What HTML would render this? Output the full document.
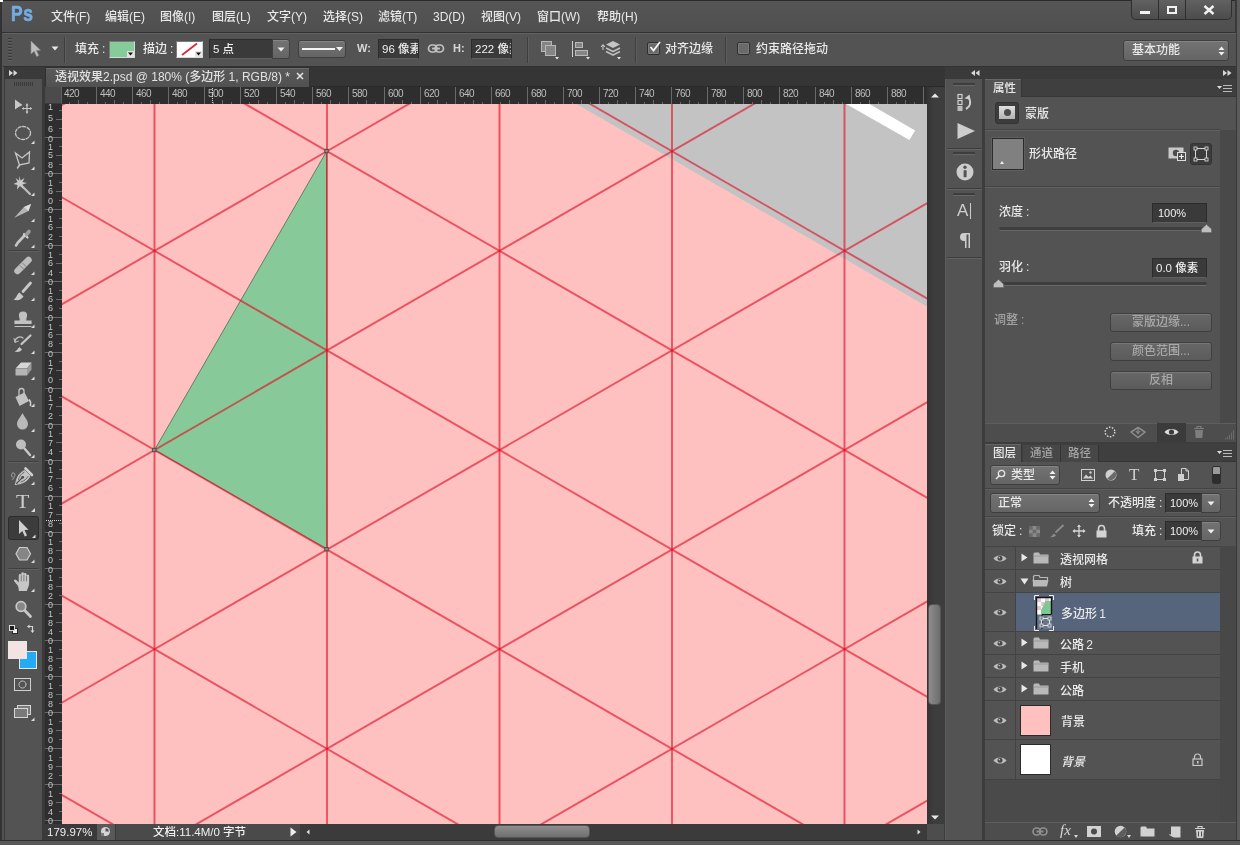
<!DOCTYPE html>
<html lang="zh-CN"><head><meta charset="utf-8"><title>透视效果2.psd</title>
<style>
*{box-sizing:border-box;margin:0;padding:0}
html,body{width:1240px;height:845px;overflow:hidden}
body{background:#535353;font-family:"Liberation Sans","Noto Sans CJK SC",sans-serif;font-size:12px;font-weight:500;color:#e9e9e9;position:relative;line-height:1}
.abs,.abs-all *{position:absolute}
i,b{font-style:normal;font-weight:normal;display:block}
.c{margin-left:3px}
.ln{word-spacing:-1.200px}
.t{position:absolute;white-space:nowrap;line-height:14px;height:14px}
svg{display:block;overflow:hidden}
/* rulers */
#hr{position:absolute;left:62px;top:87px;width:865px;height:17px;background:#2e2e2e;overflow:hidden}
#hr .mt{position:absolute;top:0;width:1px;height:17px;background:#6a6a6a}
#hr .st{position:absolute;bottom:0;width:1px;background:#6a6a6a}
#hr b{position:absolute;top:1.500px;font-size:10px;line-height:10px;color:#bebebe;letter-spacing:-.55px}
#vr{position:absolute;left:45px;top:104px;width:17px;height:720px;background:#2e2e2e;overflow:hidden}
#vr .mt{position:absolute;left:0;height:1px;width:17px;background:#6a6a6a}
#vr .st{position:absolute;right:0;height:1px;background:#6a6a6a}
#vr b{position:absolute;left:1px;width:9px;text-align:center;font-size:9px;line-height:9px;height:9px;color:#c6c6c6}
.inp{position:absolute;background:#3a3a3a;border:1px solid #2c2c2c;border-bottom-color:#5f5f5f;color:#f0f0f0;white-space:nowrap;overflow:hidden}
.btn{position:absolute;background:linear-gradient(#737373,#656565);border:1px solid #3f3f3f;border-radius:3px;box-shadow:inset 0 1px 0 #858585}
.sep{position:absolute;width:1px;background:#3e3e3e;box-shadow:1px 0 0 #5e5e5e}
#root{position:absolute;left:0;top:0;width:1240px;height:845px;will-change:transform}
</style></head><body><div id="root">
<!-- ===== window frame / menu bar ===== -->
<div class="abs" style="left:0;top:0;width:1240px;height:33px;background:linear-gradient(#555555,#4f4f4f);border-top:1px solid #2b2b2b"></div>
<div class="abs" style="left:0;top:32px;width:1236px;height:1px;background:#323232"></div>
<div class="abs" style="left:0;top:0;width:2px;height:845px;background:#333"></div>
<div class="abs" style="left:0;top:0;width:3px;height:2px;background:#fff"></div>
<div class="abs" style="left:1236px;top:0;width:4px;height:2px;background:#fff"></div>
<div class="abs" style="left:1235px;top:0;width:5px;height:845px;background:#5b5b5b;border-left:2px solid #393939"></div>
<div class="abs" style="left:11px;top:2px;font-size:22px;font-weight:bold;color:#78abde;line-height:24px;letter-spacing:.8px;transform:scaleX(.79);transform-origin:left;-webkit-text-stroke:.7px #78abde;text-shadow:0 0 1.500px #2f5278">Ps</div>
<div class="t" style="left:51px;top:10px">文件(F)</div>
<div class="t" style="left:105px;top:10px">编辑(E)</div>
<div class="t" style="left:160px;top:10px">图像(I)</div>
<div class="t" style="left:212px;top:10px">图层(L)</div>
<div class="t" style="left:267px;top:10px">文字(Y)</div>
<div class="t" style="left:323px;top:10px">选择(S)</div>
<div class="t" style="left:378px;top:10px">滤镜(T)</div>
<div class="t" style="left:433px;top:10px">3D(D)</div>
<div class="t" style="left:481px;top:10px">视图(V)</div>
<div class="t" style="left:537px;top:10px">窗口(W)</div>
<div class="t" style="left:597px;top:10px">帮助(H)</div>
<!-- window controls -->
<div class="abs" style="left:1131px;top:0;width:101px;height:20px;background:linear-gradient(#616161,#4c4c4c);border:1px solid #2e2e2e;border-top:none;border-radius:0 0 5px 5px"></div>
<div class="abs" style="left:1158px;top:0;width:1px;height:19px;background:#2e2e2e"></div>
<div class="abs" style="left:1185px;top:0;width:1px;height:19px;background:#2e2e2e"></div>
<div class="abs" style="left:1140px;top:11px;width:10px;height:3px;background:#f2f2f2"></div>
<div class="abs" style="left:1167px;top:6px;width:10px;height:8px;border:2px solid #f2f2f2;border-top-width:2px"></div>
<svg class="abs" style="left:1203px;top:5px" width="12" height="10" viewBox="0 0 12 10"><path d="M1.5 1L10.5 9M10.5 1L1.5 9" stroke="#f2f2f2" stroke-width="2.4"/></svg>
<!-- ===== options bar ===== -->
<div class="abs" style="left:3px;top:33px;width:1233px;height:34px;background:#535353;border-top:1px solid #626262;border-bottom:1px solid #323232"></div>
<div class="abs" style="left:8px;top:38px;width:4px;height:24px;background:repeating-linear-gradient(#3a3a3a 0 1px,#5f5f5f 1px 2px,#535353 2px 3px)"></div>
<svg class="abs" style="left:29px;top:40px" width="14" height="18" viewBox="0 0 14 18"><path d="M2 1L2 14L5.2 11.2L7.6 16.5L9.8 15.5L7.4 10.4L11.5 10.2Z" fill="#bdbdbd" stroke="#8a8a8a" stroke-width=".6"/></svg>
<svg class="abs" style="left:51px;top:46px" width="8" height="5" viewBox="0 0 8 5"><path d="M0.5 0.5L7.5 0.5L4 4.5Z" fill="#e6e6e6"/></svg>
<div class="sep" style="left:64px;top:37px;height:26px"></div>
<div class="t" style="left:75px;top:42px">填充<span class="c">:</span></div>
<div class="abs" style="left:109px;top:41px;width:26px;height:17px;background:#86cc98;border:1px solid #7a7a7a;border-right-color:#d8d8d8;border-bottom-color:#d8d8d8"></div>
<svg class="abs" style="left:127px;top:51px" width="7" height="6" viewBox="0 0 7 6"><rect width="7" height="6" fill="#e4e4e4"/><path d="M1 1.500L6 1.500L3.500 4.500Z" fill="#111"/></svg>
<div class="t" style="left:143px;top:42px">描边<span class="c">:</span></div>
<div class="abs" style="left:176px;top:41px;width:27px;height:17px;background:#ffffff;border:1px solid #7a7a7a;border-right-color:#d8d8d8;border-bottom-color:#d8d8d8"></div>
<svg class="abs" style="left:178px;top:42px" width="24" height="15" viewBox="0 0 24 15"><path d="M4 13L19 1.500" stroke="#d82c34" stroke-width="1.800"/><rect x="17" y="9" width="7" height="6" fill="#e4e4e4"/><path d="M18 10.500L23 10.500L20.500 13.500Z" fill="#111"/></svg>
<div class="inp" style="left:209px;top:39px;width:64px;height:20px;line-height:18px;padding-left:3px;font-size:11.500px">5 点</div>
<div class="btn" style="left:272px;top:39px;width:18px;height:20px;border-radius:0 3px 3px 0"></div>
<svg class="abs" style="left:277px;top:47px" width="8" height="5" viewBox="0 0 8 5"><path d="M0.5 0.5L7.5 0.5L4 4.5Z" fill="#f0f0f0"/></svg>
<div class="btn" style="left:298px;top:40px;width:48px;height:18px"></div>
<div class="abs" style="left:302px;top:48px;width:33px;height:2px;background:#f4f4f4"></div>
<svg class="abs" style="left:336px;top:47px" width="7" height="4" viewBox="0 0 7 4"><path d="M0 0L7 0L3.5 4Z" fill="#f0f0f0"/></svg>
<div class="t" style="left:357px;top:41px;font-weight:bold;font-size:11px;color:#d8d8d8">W:</div>
<div class="inp" style="left:378px;top:39px;width:41px;height:20px;line-height:18px;padding-left:3px;font-size:11.500px">96 像素</div>
<svg class="abs" style="left:427px;top:43px" width="18" height="11" viewBox="0 0 18 11" fill="none"><rect x="1.500" y="2" width="8.500" height="7" rx="3.500" stroke="#c2c2c2" stroke-width="1.700"/><rect x="8" y="2" width="8.500" height="7" rx="3.500" stroke="#c2c2c2" stroke-width="1.700"/><rect x="5" y="4.600" width="8" height="1.800" fill="#c2c2c2"/></svg>
<div class="t" style="left:453px;top:41px;font-weight:bold;font-size:11px;color:#d8d8d8">H:</div>
<div class="inp" style="left:471px;top:39px;width:41px;height:20px;line-height:18px;padding-left:3px;font-size:11.500px">222 像素</div>
<div class="sep" style="left:527px;top:37px;height:26px"></div>
<!-- path ops icons -->
<svg class="abs" style="left:540px;top:40px" width="20" height="20" viewBox="0 0 20 20"><rect x="1.5" y="1.5" width="10" height="10" fill="#858585" stroke="#b8b8b8"/><rect x="5.5" y="5.5" width="10" height="10" fill="#858585" stroke="#b8b8b8"/><path d="M15 17L19 17L17 19.5Z" fill="#e6e6e6"/></svg>
<svg class="abs" style="left:570px;top:40px" width="22" height="20" viewBox="0 0 22 20"><path d="M2.5 1V17" stroke="#d0d0d0"/><rect x="5.5" y="2.5" width="7" height="5" fill="#858585" stroke="#b8b8b8"/><rect x="5.5" y="10.500" width="12" height="5" fill="#858585" stroke="#b8b8b8"/><path d="M16 17L20 17L18 19.5Z" fill="#e6e6e6"/></svg>
<svg class="abs" style="left:600px;top:39px" width="24" height="22" viewBox="0 0 24 22"><path d="M3 6V11M1 8L3 5.500L5 8" stroke="#d6d6d6" fill="none"/><path d="M13 2L20 5.500L13 9L6 5.500Z" fill="#c4c4c4"/><path d="M6 9L13 12.500L20 9M6 12.500L13 16L20 12.500" stroke="#bdbdbd" stroke-width="1.6" fill="none"/><path d="M17 18L21 18L19 20.500Z" fill="#e6e6e6"/></svg>
<div class="sep" style="left:635px;top:37px;height:26px"></div>
<div class="abs" style="left:647px;top:42px;width:13px;height:13px;background:#6a6a6a;border:1px solid #2f2f2f;border-radius:2px;box-shadow:inset 0 0 0 1px #7d7d7d"></div>
<svg class="abs" style="left:648px;top:40px" width="14" height="14" viewBox="0 0 14 14"><path d="M2.500 7L5.500 10.500L12 2" stroke="#f4f4f4" stroke-width="1.8" fill="none"/></svg>
<div class="t" style="left:665px;top:42px">对齐边缘</div>
<div class="sep" style="left:725px;top:37px;height:26px"></div>
<div class="abs" style="left:737px;top:42px;width:13px;height:13px;background:#6a6a6a;border:1px solid #2f2f2f;border-radius:2px;box-shadow:inset 0 0 0 1px #7d7d7d"></div>
<div class="t" style="left:756px;top:42px">约束路径拖动</div>
<div class="btn" style="left:1123px;top:40px;width:106px;height:21px"></div>
<div class="t" style="left:1132px;top:43px">基本功能</div>
<svg class="abs" style="left:1218px;top:46px" width="7" height="10" viewBox="0 0 7 10"><path d="M0.500 4L6.500 4L3.500 0.500ZM0.500 6L6.500 6L3.500 9.500Z" fill="#f0f0f0"/></svg>
<!-- ===== left toolbar ===== -->
<div class="abs" style="left:4px;top:67px;width:39px;height:773px;background:#535353;border-left:1px solid #3a3a3a;border-right:1px solid #3a3a3a"></div>
<div class="abs" style="left:5px;top:67px;width:37px;height:12px;background:#3a3a3a"></div>
<svg class="abs" style="left:9px;top:70px" width="9" height="6" viewBox="0 0 9 6"><path d="M0 0L4 3L0 6ZM4.500 0L8.500 3L4.500 6Z" fill="#d8d8d8"/></svg>
<div class="abs" style="left:14px;top:82px;width:20px;height:4px;background:repeating-linear-gradient(90deg,#3a3a3a 0 1px,#535353 1px 2px)"></div>
<svg class="abs" style="left:5px;top:90px" width="37" height="640" viewBox="5 90 37 640" fill="none" stroke-linecap="round">
<defs><path id="ct" d="M0 0L3.500 0L3.500 -3.500Z" fill="#dcdcdc" stroke="none"/></defs>
<!-- move -->
<path d="M15 99.500L15 109.500L17.800 107.500L22.500 105Z" fill="#c8c8c8"/>
<path d="M27 104V113M22.500 108.500H31.500" stroke="#c8c8c8" stroke-width="1.200"/><path d="M25.500 105.500L27 103.500L28.500 105.500ZM25.500 111.500L27 113.500L28.500 111.500ZM24 107L22 108.500L24 110ZM30 107L32 108.500L30 110Z" fill="#c8c8c8"/>
<!-- ellipse marquee -->
<ellipse cx="23" cy="133" rx="7.500" ry="6.500" stroke="#c6c6c6" stroke-width="1.300" stroke-dasharray="3 1.600"/>
<use href="#ct" x="31" y="144"/>
<!-- polygon lasso -->
<path d="M15.500 153L22 158L29.500 152L29 163L19.500 165Z" stroke="#c6c6c6" stroke-width="1.300"/><path d="M19.500 165L17.500 168" stroke="#c6c6c6" stroke-width="1.500"/>
<use href="#ct" x="31" y="170"/>
<!-- magic wand -->
<path d="M21 185L30 194" stroke="#bdbdbd" stroke-width="2.200"/><path d="M19.500 176L20.500 180.500L24.500 178L22.500 182L27 183L22.500 184.500L23.500 189L20 186L17 189.500L17.500 185L13.500 184L17.500 182L15.500 178L19 180.500Z" fill="#c8c8c8"/>
<use href="#ct" x="31" y="196"/>
<!-- slice -->
<path d="M14 218L24 207L31 204L28.500 211Z" fill="#b4b4b4"/><path d="M24 207L31 204L28.500 211Z" fill="#dedede"/>
<use href="#ct" x="31" y="222"/>
<!-- eyedropper -->
<path d="M17 244L16 245.500M17.500 243L24.500 235.500" stroke="#c6c6c6" stroke-width="2.600"/><path d="M24 234L27.500 237.500" stroke="#dcdcdc" stroke-width="2"/><path d="M26.500 234.500L29 231.500" stroke="#9b9b9b" stroke-width="3.600"/>
<use href="#ct" x="31" y="248"/>
<path d="M9 250.500H38" stroke="#3f3f3f" stroke-width="1"/><path d="M9 251.500H38" stroke="#606060" stroke-width="1"/>
<!-- healing -->
<path d="M17.500 271L28.500 260" stroke="#bcbcbc" stroke-width="6.500"/><path d="M20 265.500L23.500 269M22.500 263L26 266.500" stroke="#7d7d7d" stroke-width="1"/>
<use href="#ct" x="31" y="275"/>
<!-- brush -->
<path d="M23 291.500L30.500 283" stroke="#c8c8c8" stroke-width="2.800"/><path d="M13.500 299.500C16.500 298.500 16.500 294.500 19.500 292.500L23.500 296.500C21.500 300 17 301 13.500 299.500Z" fill="#c8c8c8"/>
<use href="#ct" x="31" y="301"/>
<!-- stamp -->
<path d="M15 326.500H31M15 323.500H31V321H26C25 319 26.500 317 26.500 315.500A3.500 3.500 0 0 0 19.500 315.500C19.500 317 21 319 20 321H15Z" fill="#c2c2c2" stroke="#c2c2c2" stroke-width="1.200"/>
<use href="#ct" x="31" y="328"/>
<!-- history brush -->
<path d="M21.500 344L30.500 335.500" stroke="#c8c8c8" stroke-width="2.200"/><path d="M14.500 351.500C17 351 17.500 348.500 19.500 347L22 349.500C20.500 352 17 352.500 14.500 351.500Z" fill="#c8c8c8"/><path d="M15 341.500A5 5 0 0 1 23 338" stroke="#c0c0c0" stroke-width="1.300"/><path d="M14 338.500L15 342.500L18.500 341" stroke="#c0c0c0" stroke-width="1"/>
<use href="#ct" x="31" y="354"/>
<!-- eraser -->
<path d="M21 362.500H31.500L27 368.500H15.500Z" fill="#d6d6d6"/><path d="M15.500 369H27V375.500H15.500Z" fill="#b4b4b4"/><path d="M27 368.500L31.500 362.500V369.500L27 375.500Z" fill="#9a9a9a"/>
<use href="#ct" x="31" y="380"/>
<!-- bucket -->
<g transform="translate(0 2.500)"><path d="M15.500 394.500L24.500 390L29 398.500L19.500 403.500Z" fill="#c2c2c2"/><path d="M19 393V388.500A2.500 2.500 0 0 1 24 388.500V391" stroke="#c2c2c2" stroke-width="1.300"/><path d="M29.500 397.500C31 399.500 31 401 30.500 403" stroke="#d6d6d6" stroke-width="1.600"/></g>
<use href="#ct" x="31" y="407"/>
<!-- blur drop -->
<path d="M22.500 413C25 418 28 420.500 28 424A5.500 5.500 0 0 1 17 424C17 420.500 20 418 22.500 413Z" fill="#b9b9b9"/>
<use href="#ct" x="31" y="432"/>
<!-- dodge -->
<circle cx="21" cy="444.500" r="5" fill="#bebebe"/><path d="M24.500 448.500L30 455" stroke="#c8c8c8" stroke-width="2.400"/>
<use href="#ct" x="31" y="458"/>
<path d="M9 461.500H38" stroke="#3f3f3f" stroke-width="1"/><path d="M9 462.500H38" stroke="#606060" stroke-width="1"/>
<!-- pen -->
<path d="M15.500 484.500C16.500 479 18 473.500 24.500 470.500L30 476C27 482.500 21.500 483.500 15.500 484.500Z" fill="#c4c4c4" stroke="#c6c6c6" stroke-width="1"/><path d="M16.500 483.500L22 478" stroke="#4a4a4a" stroke-width="1.100"/><circle cx="22.700" cy="477.300" r="1.400" fill="#4a4a4a"/><path d="M18.500 479.500C19.500 476 21 473.800 24 472.300M21 482C24 481 26.300 479.500 28 476.500" stroke="#5a5a5a" stroke-width=".9"/><path d="M25.500 468.500L32 475" stroke="#d0d0d0" stroke-width="2.600"/><path d="M12 477C10.500 474.500 12.500 471.500 14.500 473.500C16 475 13.500 477.500 12.800 479.500" stroke="#a8a8a8" stroke-width="1"/>
<use href="#ct" x="31" y="485"/>
<!-- selected tool bg -->
<rect x="8.500" y="516.500" width="30" height="23" rx="2" fill="#3c3c3c" stroke="#2d2d2d"/>
<!-- path selection arrow -->
<path d="M19 520L19 534L22.300 531L24.800 536.500L27 535.500L24.500 530L28.500 529.800Z" fill="#cfcfcf"/>
<use href="#ct" x="32" y="538"/>
<!-- polygon shape -->
<path d="M19.500 547.500H27L30.500 553.800L27 560H19.500L16 553.800Z" fill="#858585" stroke="#cdcdcd" stroke-width="1.200"/>
<use href="#ct" x="31" y="563"/>
<path d="M9 568.500H38" stroke="#3f3f3f" stroke-width="1"/><path d="M9 569.500H38" stroke="#606060" stroke-width="1"/>
<!-- hand -->
<g transform="translate(22.500 582) scale(1.250 1.050) translate(-21.500 -581)"><path d="M17.500 584L15 580.500C14 579 15.500 578 16.800 579.300L18.500 581.500V574.500C18.500 573 20.500 573 20.500 574.500V572.800C20.500 571.300 22.600 571.300 22.600 572.800V573.500C22.600 572 24.700 572 24.700 573.500V575C24.700 573.800 26.800 573.800 26.800 575V582C26.800 585 25.500 587 25 589.500H18.500C18.500 587.500 18.500 586 17.500 584Z" fill="#c6c6c6"/><path d="M20.500 575V580M22.600 574.500V580M24.700 575.500V580" stroke="#6a6a6a" stroke-width=".7"/></g>
<use href="#ct" x="31" y="592"/>
<!-- zoom -->
<circle cx="21" cy="606.500" r="4.800" fill="#878787" stroke="#c8c8c8" stroke-width="1.700"/><path d="M24.800 610.500L30.500 616.500" stroke="#c8c8c8" stroke-width="2.800"/>
<!-- default colors + swap -->
<rect x="12.500" y="628.500" width="5" height="5" fill="#f0f0f0" stroke="#2a2a2a"/><rect x="9.500" y="625.500" width="5" height="5" fill="#1c1c1c" stroke="#dcdcdc"/>
<path d="M29 626.500H32.500V631" stroke="#d6d6d6" stroke-width="1.200"/><path d="M27 626.500L29.500 624.500V628.500ZM32.500 633L30.500 630.500H34.500Z" fill="#d6d6d6"/>
<!-- fg/bg -->
<rect x="19.500" y="651.500" width="17" height="17" fill="#25aaf5" stroke="#e8e8e8"/>
<rect x="8.500" y="641.500" width="18" height="17" fill="#f3e3e3" stroke="#e8e8e8"/>
<!-- quick mask -->
<rect x="14.500" y="678.500" width="16" height="12" stroke="#d0d0d0" stroke-width="1"/><circle cx="22.500" cy="684.500" r="3.500" stroke="#d0d0d0" stroke-width="1" stroke-dasharray="1 1"/>
<!-- screen mode -->
<rect x="17.500" y="705.500" width="13" height="9" fill="#7a7a7a" stroke="#d6d6d6"/><rect x="14.500" y="708.500" width="13" height="9" fill="#7a7a7a" stroke="#d6d6d6"/>
<use href="#ct" x="31" y="721"/>
</svg>
<div class="abs" style="left:16px;top:490px;font-family:'Liberation Serif',serif;font-size:19px;font-weight:normal;line-height:24px;color:#cfcfcf;transform:scaleX(1.150);transform-origin:left">T</div>
<svg class="abs" style="left:31px;top:508px" width="4" height="4" viewBox="0 0 4 4"><path d="M0 4L4 4L4 0Z" fill="#dcdcdc"/></svg>
<!-- ===== document window ===== -->
<div class="abs" style="left:43px;top:67px;width:905px;height:773px;background:#3a3a3a"></div>
<div class="abs" style="left:45px;top:67px;width:900px;height:20px;background:#353535;border-bottom:1px solid #2a2a2a"></div>
<div class="abs" style="left:45px;top:67px;width:265px;height:20px;background:linear-gradient(#5a5a5a,#515151);border:1px solid #303030;border-bottom:none;box-shadow:inset 0 1px 0 #6a6a6a"></div>
<div class="t" style="left:55px;top:70px;color:#e2e2e2">透视效果2.psd @ 180% (多边形 1, RGB/8) *</div>
<svg class="abs" style="left:296px;top:72px" width="8" height="8" viewBox="0 0 8 8"><path d="M1 1L7 7M7 1L1 7" stroke="#e6e6e6" stroke-width="1.500"/></svg>
<div class="abs" style="left:45px;top:87px;width:17px;height:17px;background:#4b4b4b;border-right:1px solid #5d5d5d;border-bottom:1px solid #3a3a3a"></div>
<div id="hr"><i class="st" style="left:7px;height:2px"></i><i class="st" style="left:16px;height:4px"></i><i class="st" style="left:25px;height:2px"></i><i class="mt" style="left:34px"></i><i class="st" style="left:43px;height:2px"></i><i class="st" style="left:52px;height:4px"></i><i class="st" style="left:61px;height:2px"></i><i class="mt" style="left:70px"></i><i class="st" style="left:79px;height:2px"></i><i class="st" style="left:88px;height:4px"></i><i class="st" style="left:97px;height:2px"></i><i class="mt" style="left:106px"></i><i class="st" style="left:115px;height:2px"></i><i class="st" style="left:124px;height:4px"></i><i class="st" style="left:133px;height:2px"></i><i class="mt" style="left:142px"></i><i class="st" style="left:151px;height:2px"></i><i class="st" style="left:160px;height:4px"></i><i class="st" style="left:169px;height:2px"></i><i class="mt" style="left:178px"></i><i class="st" style="left:187px;height:2px"></i><i class="st" style="left:196px;height:4px"></i><i class="st" style="left:205px;height:2px"></i><i class="mt" style="left:214px"></i><i class="st" style="left:223px;height:2px"></i><i class="st" style="left:232px;height:4px"></i><i class="st" style="left:241px;height:2px"></i><i class="mt" style="left:250px"></i><i class="st" style="left:259px;height:2px"></i><i class="st" style="left:268px;height:4px"></i><i class="st" style="left:277px;height:2px"></i><i class="mt" style="left:286px"></i><i class="st" style="left:295px;height:2px"></i><i class="st" style="left:304px;height:4px"></i><i class="st" style="left:313px;height:2px"></i><i class="mt" style="left:322px"></i><i class="st" style="left:331px;height:2px"></i><i class="st" style="left:340px;height:4px"></i><i class="st" style="left:349px;height:2px"></i><i class="mt" style="left:358px"></i><i class="st" style="left:366px;height:2px"></i><i class="st" style="left:375px;height:4px"></i><i class="st" style="left:384px;height:2px"></i><i class="mt" style="left:393px"></i><i class="st" style="left:402px;height:2px"></i><i class="st" style="left:411px;height:4px"></i><i class="st" style="left:420px;height:2px"></i><i class="mt" style="left:429px"></i><i class="st" style="left:438px;height:2px"></i><i class="st" style="left:447px;height:4px"></i><i class="st" style="left:456px;height:2px"></i><i class="mt" style="left:465px"></i><i class="st" style="left:474px;height:2px"></i><i class="st" style="left:483px;height:4px"></i><i class="st" style="left:492px;height:2px"></i><i class="mt" style="left:501px"></i><i class="st" style="left:510px;height:2px"></i><i class="st" style="left:519px;height:4px"></i><i class="st" style="left:528px;height:2px"></i><i class="mt" style="left:537px"></i><i class="st" style="left:546px;height:2px"></i><i class="st" style="left:555px;height:4px"></i><i class="st" style="left:564px;height:2px"></i><i class="mt" style="left:573px"></i><i class="st" style="left:582px;height:2px"></i><i class="st" style="left:591px;height:4px"></i><i class="st" style="left:600px;height:2px"></i><i class="mt" style="left:609px"></i><i class="st" style="left:618px;height:2px"></i><i class="st" style="left:627px;height:4px"></i><i class="st" style="left:636px;height:2px"></i><i class="mt" style="left:645px"></i><i class="st" style="left:654px;height:2px"></i><i class="st" style="left:663px;height:4px"></i><i class="st" style="left:672px;height:2px"></i><i class="mt" style="left:681px"></i><i class="st" style="left:690px;height:2px"></i><i class="st" style="left:699px;height:4px"></i><i class="st" style="left:708px;height:2px"></i><i class="mt" style="left:717px"></i><i class="st" style="left:726px;height:2px"></i><i class="st" style="left:735px;height:4px"></i><i class="st" style="left:744px;height:2px"></i><i class="mt" style="left:753px"></i><i class="st" style="left:762px;height:2px"></i><i class="st" style="left:771px;height:4px"></i><i class="st" style="left:780px;height:2px"></i><i class="mt" style="left:789px"></i><i class="st" style="left:798px;height:2px"></i><i class="st" style="left:807px;height:4px"></i><i class="st" style="left:816px;height:2px"></i><i class="mt" style="left:825px"></i><i class="st" style="left:834px;height:2px"></i><i class="st" style="left:843px;height:4px"></i><i class="st" style="left:852px;height:2px"></i><i class="mt" style="left:861px"></i><b style="left:2px">420</b><b style="left:38px">440</b><b style="left:74px">460</b><b style="left:110px">480</b><b style="left:146px">500</b><b style="left:182px">520</b><b style="left:218px">540</b><b style="left:254px">560</b><b style="left:290px">580</b><b style="left:326px">600</b><b style="left:362px">620</b><b style="left:397px">640</b><b style="left:433px">660</b><b style="left:469px">680</b><b style="left:505px">700</b><b style="left:541px">720</b><b style="left:577px">740</b><b style="left:613px">760</b><b style="left:649px">780</b><b style="left:685px">800</b><b style="left:721px">820</b><b style="left:757px">840</b><b style="left:793px">860</b><b style="left:829px">880</b></div>
<div id="vr"><i class="st" style="top:6px;width:3px"></i><i class="st" style="top:15px;width:6px"></i><i class="st" style="top:24px;width:3px"></i><i class="mt" style="top:33px"></i><i class="st" style="top:42px;width:3px"></i><i class="st" style="top:51px;width:6px"></i><i class="st" style="top:60px;width:3px"></i><i class="mt" style="top:69px"></i><i class="st" style="top:78px;width:3px"></i><i class="st" style="top:87px;width:6px"></i><i class="st" style="top:96px;width:3px"></i><i class="mt" style="top:105px"></i><i class="st" style="top:114px;width:3px"></i><i class="st" style="top:123px;width:6px"></i><i class="st" style="top:132px;width:3px"></i><i class="mt" style="top:141px"></i><i class="st" style="top:150px;width:3px"></i><i class="st" style="top:159px;width:6px"></i><i class="st" style="top:168px;width:3px"></i><i class="mt" style="top:177px"></i><i class="st" style="top:186px;width:3px"></i><i class="st" style="top:195px;width:6px"></i><i class="st" style="top:204px;width:3px"></i><i class="mt" style="top:213px"></i><i class="st" style="top:221px;width:3px"></i><i class="st" style="top:230px;width:6px"></i><i class="st" style="top:239px;width:3px"></i><i class="mt" style="top:248px"></i><i class="st" style="top:257px;width:3px"></i><i class="st" style="top:266px;width:6px"></i><i class="st" style="top:275px;width:3px"></i><i class="mt" style="top:284px"></i><i class="st" style="top:293px;width:3px"></i><i class="st" style="top:302px;width:6px"></i><i class="st" style="top:311px;width:3px"></i><i class="mt" style="top:320px"></i><i class="st" style="top:329px;width:3px"></i><i class="st" style="top:338px;width:6px"></i><i class="st" style="top:347px;width:3px"></i><i class="mt" style="top:356px"></i><i class="st" style="top:365px;width:3px"></i><i class="st" style="top:374px;width:6px"></i><i class="st" style="top:383px;width:3px"></i><i class="mt" style="top:392px"></i><i class="st" style="top:401px;width:3px"></i><i class="st" style="top:410px;width:6px"></i><i class="st" style="top:419px;width:3px"></i><i class="mt" style="top:428px"></i><i class="st" style="top:437px;width:3px"></i><i class="st" style="top:446px;width:6px"></i><i class="st" style="top:455px;width:3px"></i><i class="mt" style="top:464px"></i><i class="st" style="top:473px;width:3px"></i><i class="st" style="top:482px;width:6px"></i><i class="st" style="top:491px;width:3px"></i><i class="mt" style="top:500px"></i><i class="st" style="top:509px;width:3px"></i><i class="st" style="top:518px;width:6px"></i><i class="st" style="top:527px;width:3px"></i><i class="mt" style="top:536px"></i><i class="st" style="top:545px;width:3px"></i><i class="st" style="top:554px;width:6px"></i><i class="st" style="top:563px;width:3px"></i><i class="mt" style="top:572px"></i><i class="st" style="top:581px;width:3px"></i><i class="st" style="top:590px;width:6px"></i><i class="st" style="top:599px;width:3px"></i><i class="mt" style="top:608px"></i><i class="st" style="top:617px;width:3px"></i><i class="st" style="top:626px;width:6px"></i><i class="st" style="top:635px;width:3px"></i><i class="mt" style="top:644px"></i><i class="st" style="top:653px;width:3px"></i><i class="st" style="top:662px;width:6px"></i><i class="st" style="top:671px;width:3px"></i><i class="mt" style="top:680px"></i><i class="st" style="top:689px;width:3px"></i><i class="st" style="top:698px;width:6px"></i><i class="st" style="top:707px;width:3px"></i><i class="mt" style="top:716px"></i><b style="top:-0.7px">1</b><b style="top:9.9px">5</b><b style="top:20.9px">6</b><b style="top:30.5px">0</b><b style="top:38.8px">1</b><b style="top:47.4px">5</b><b style="top:56.7px">8</b><b style="top:66.1px">0</b><b style="top:74.7px">1</b><b style="top:83.4px">6</b><b style="top:92.6px">0</b><b style="top:102.0px">0</b><b style="top:110.7px">1</b><b style="top:119.3px">6</b><b style="top:128.6px">2</b><b style="top:137.9px">0</b><b style="top:146.6px">1</b><b style="top:155.3px">6</b><b style="top:164.5px">4</b><b style="top:173.9px">0</b><b style="top:182.6px">1</b><b style="top:191.2px">6</b><b style="top:200.4px">6</b><b style="top:209.9px">0</b><b style="top:218.5px">1</b><b style="top:227.2px">6</b><b style="top:236.4px">8</b><b style="top:245.8px">0</b><b style="top:254.5px">1</b><b style="top:263.2px">7</b><b style="top:272.4px">0</b><b style="top:281.8px">0</b><b style="top:290.4px">1</b><b style="top:299.1px">7</b><b style="top:308.3px">2</b><b style="top:317.7px">0</b><b style="top:326.4px">1</b><b style="top:335.1px">7</b><b style="top:344.2px">4</b><b style="top:353.7px">0</b><b style="top:362.3px">1</b><b style="top:371.0px">7</b><b style="top:380.2px">6</b><b style="top:389.6px">0</b><b style="top:398.3px">1</b><b style="top:407.0px">7</b><b style="top:416.2px">8</b><b style="top:425.6px">0</b><b style="top:434.2px">1</b><b style="top:442.9px">8</b><b style="top:452.1px">0</b><b style="top:461.5px">0</b><b style="top:470.1px">1</b><b style="top:478.9px">8</b><b style="top:488.0px">2</b><b style="top:497.4px">0</b><b style="top:506.1px">1</b><b style="top:514.8px">8</b><b style="top:524.0px">4</b><b style="top:533.4px">0</b><b style="top:542.0px">1</b><b style="top:550.8px">8</b><b style="top:559.9px">6</b><b style="top:569.3px">0</b><b style="top:578.0px">1</b><b style="top:586.7px">8</b><b style="top:595.9px">8</b><b style="top:605.3px">0</b><b style="top:614.0px">1</b><b style="top:622.7px">9</b><b style="top:631.9px">0</b><b style="top:641.2px">0</b><b style="top:649.9px">1</b><b style="top:658.6px">9</b><b style="top:667.8px">2</b><b style="top:677.2px">0</b><b style="top:685.9px">1</b><b style="top:694.6px">9</b><b style="top:703.8px">4</b><b style="top:713.1px">0</b></div>
<svg class="abs" style="left:62px;top:104px" width="865" height="720" viewBox="0 0 865 720">
<defs><filter id="sf" x="-5%" y="-5%" width="110%" height="110%"><feGaussianBlur stdDeviation="0.45"/></filter></defs>
<rect width="865" height="720" fill="#ffc0c0"/>
<polygon points="514.5,0 865,0 865,202.4" fill="#c3c3c3"/>
<polygon points="784.1,0 807.5,0 853.1,26.599999999999994 847.4,35.900000000000006" fill="#ffffff"/>
<polygon points="264.5,47.5 92.5,346 265,445" fill="#88c999" stroke="#4f6b58" stroke-width="0.8"/>
<g stroke="#de1028" stroke-opacity=".64" stroke-width="1.9" fill="none" filter="url(#sf)"><line x1="-80.00" y1="-5" x2="-80.00" y2="725"/><line x1="92.50" y1="-5" x2="92.50" y2="725"/><line x1="265.00" y1="-5" x2="265.00" y2="725"/><line x1="437.50" y1="-5" x2="437.50" y2="725"/><line x1="610.00" y1="-5" x2="610.00" y2="725"/><line x1="782.50" y1="-5" x2="782.50" y2="725"/><line x1="955.00" y1="-5" x2="955.00" y2="725"/><line x1="-62.00" y1="-938.32" x2="938.00" y2="-360.97"/><line x1="-62.00" y1="-759.91" x2="938.00" y2="-1337.26"/><line x1="-62.00" y1="-739.13" x2="938.00" y2="-161.78"/><line x1="-62.00" y1="-560.73" x2="938.00" y2="-1138.08"/><line x1="-62.00" y1="-539.94" x2="938.00" y2="37.41"/><line x1="-62.00" y1="-361.54" x2="938.00" y2="-938.89"/><line x1="-62.00" y1="-340.76" x2="938.00" y2="236.59"/><line x1="-62.00" y1="-162.36" x2="938.00" y2="-739.71"/><line x1="-62.00" y1="-141.57" x2="938.00" y2="435.78"/><line x1="-62.00" y1="36.83" x2="938.00" y2="-540.52"/><line x1="-62.00" y1="57.61" x2="938.00" y2="634.96"/><line x1="-62.00" y1="236.01" x2="938.00" y2="-341.34"/><line x1="-62.00" y1="256.80" x2="938.00" y2="834.15"/><line x1="-62.00" y1="435.20" x2="938.00" y2="-142.15"/><line x1="-62.00" y1="455.99" x2="938.00" y2="1033.34"/><line x1="-62.00" y1="634.39" x2="938.00" y2="57.04"/><line x1="-62.00" y1="655.17" x2="938.00" y2="1232.52"/><line x1="-62.00" y1="833.57" x2="938.00" y2="256.22"/><line x1="-62.00" y1="854.36" x2="938.00" y2="1431.71"/><line x1="-62.00" y1="1032.76" x2="938.00" y2="455.41"/><line x1="-62.00" y1="1053.54" x2="938.00" y2="1630.89"/><line x1="-62.00" y1="1231.94" x2="938.00" y2="654.59"/><line x1="-62.00" y1="1252.73" x2="938.00" y2="1830.08"/><line x1="-62.00" y1="1431.13" x2="938.00" y2="853.78"/><line x1="-62.00" y1="1451.91" x2="938.00" y2="2029.26"/><line x1="-62.00" y1="1630.32" x2="938.00" y2="1052.97"/><line x1="-62.00" y1="1651.10" x2="938.00" y2="2228.45"/><line x1="-62.00" y1="1829.50" x2="938.00" y2="1252.15"/></g>
<g fill="#7d9588" stroke="#4a4a4a" stroke-width=".9"><rect x="262.8" y="45.30000000000001" width="3.4" height="3.4"/><rect x="90.6" y="344.3" width="3.4" height="3.4"/><rect x="262.8" y="443.5" width="3.4" height="3.4"/></g>
</svg>
<div class="abs" style="left:212px;top:88px;width:1px;height:16px;background:repeating-linear-gradient(#d8d8d8 0 1px,transparent 1px 2px)"></div>
<div class="abs" style="left:46px;top:520px;width:16px;height:1px;background:repeating-linear-gradient(90deg,#d8d8d8 0 1px,transparent 1px 2px)"></div>
<!-- v scrollbar -->
<div class="abs" style="left:927px;top:87px;width:17px;height:737px;background:linear-gradient(90deg,#333,#3d3d3d 40%,#3d3d3d)"></div>
<svg class="abs" style="left:931px;top:93px" width="8" height="5" viewBox="0 0 8 5"><path d="M0 4.500L4 0.500L8 4.500Z" fill="#e8e8e8"/></svg>
<svg class="abs" style="left:931px;top:815px" width="8" height="5" viewBox="0 0 8 5"><path d="M0 0.500L4 4.500L8 0.500Z" fill="#e8e8e8"/></svg>
<div class="abs" style="left:928px;top:604px;width:13px;height:101px;border-radius:4px;background:linear-gradient(90deg,#8c8c8c,#6d6d6d);border:1px solid #555"></div>
<!-- status bar -->
<div class="abs" style="left:45px;top:824px;width:882px;height:16px;background:#3b3b3b"></div>
<div class="abs" style="left:45px;top:824px;width:52px;height:16px;background:#3a3a3a"></div>
<div class="t" style="left:47px;top:825px;font-size:11.500px;color:#f0f0f0">179.97%</div>
<div class="abs" style="left:97px;top:824px;width:18px;height:16px;background:#595959"></div>
<svg class="abs" style="left:100px;top:826px" width="11" height="11" viewBox="0 0 11 11"><circle cx="5.500" cy="5.500" r="4.500" fill="#d6d6d6"/><path d="M5.500 5.500V2.200A3.300 3.300 0 0 1 8.800 5.500Z" fill="#555"/><rect x="1" y="7" width="3" height="3" fill="#7a7a7a"/></svg>
<div class="abs" style="left:116px;top:824px;width:184px;height:16px;background:#4a4a4a"></div>
<div class="t" style="left:153px;top:825px;font-size:11.500px;color:#f0f0f0">文档:11.4M/0 字节</div>
<svg class="abs" style="left:290px;top:827px" width="7" height="10" viewBox="0 0 7 10"><path d="M0.500 0.500L6.500 5L0.500 9.500Z" fill="#f0f0f0"/></svg>
<svg class="abs" style="left:306px;top:829px" width="4" height="6" viewBox="0 0 4 6"><path d="M3.500 0.500L0.500 3L3.500 5.500Z" fill="#e0e0e0"/></svg>
<svg class="abs" style="left:917px;top:829px" width="4" height="6" viewBox="0 0 4 6"><path d="M0.500 0.500L3.500 3L0.500 5.500Z" fill="#e0e0e0"/></svg>
<div class="abs" style="left:494px;top:825px;width:96px;height:13px;border-radius:4px;background:linear-gradient(#8e8e8e,#6f6f6f);border:1px solid #555"></div>
<div class="abs" style="left:927px;top:824px;width:17px;height:16px;background:#4d4d4d"></div>
<!-- bottom frame -->
<div class="abs" style="left:0;top:840px;width:1240px;height:5px;background:#585858;border-top:1px solid #2e2e2e"></div>
<!-- ===== right dock ===== -->
<div class="abs" style="left:945px;top:67px;width:291px;height:773px;background:#3d3d3d"></div>
<div class="abs" style="left:945px;top:67px;width:291px;height:12px;background:#3a3a3a"></div>
<svg class="abs" style="left:971px;top:70px" width="9" height="6" viewBox="0 0 9 6"><path d="M4 0L0 3L4 6ZM8.500 0L4.500 3L8.500 6Z" fill="#d8d8d8"/></svg>
<svg class="abs" style="left:1223px;top:70px" width="9" height="6" viewBox="0 0 9 6"><path d="M0 0L4 3L0 6ZM4.500 0L8.500 3L4.500 6Z" fill="#d8d8d8"/></svg>
<!-- collapsed icon strip -->
<div class="abs" style="left:945px;top:79px;width:37px;height:761px;background:#535353;border-left:1px solid #5f5f5f"></div>
<div class="abs" style="left:953px;top:83px;width:22px;height:3px;background:#3d3d3d;border-bottom:1px solid #666"></div>
<svg class="abs" style="left:955px;top:92px" width="20" height="20" viewBox="0 0 20 20" fill="none"><rect x="3" y="2.500" width="4" height="4" stroke="#cfcfcf" stroke-width="1.200"/><rect x="3" y="8.500" width="4" height="4" stroke="#cfcfcf" stroke-width="1.200"/><rect x="2.500" y="14" width="5" height="5" fill="#bdbdbd"/><path d="M11 17C15 15 17 10 13 5" stroke="#cfcfcf" stroke-width="2"/><path d="M9.500 6.500L14.500 2.500L15.500 7.500Z" fill="#cfcfcf"/></svg>
<svg class="abs" style="left:956px;top:122px" width="20" height="18" viewBox="0 0 20 18"><path d="M1.500 1L19 9L1.500 17Z" fill="#cdcdcd"/></svg>
<div class="abs" style="left:947px;top:148px;width:35px;height:1px;background:#3d3d3d;box-shadow:0 1px 0 #636363"></div>
<div class="abs" style="left:953px;top:152px;width:22px;height:3px;background:#3d3d3d;border-bottom:1px solid #666"></div>
<svg class="abs" style="left:955px;top:162px" width="20" height="20" viewBox="0 0 20 20"><circle cx="10" cy="10" r="8.500" fill="#cdcdcd"/><rect x="8.600" y="8.200" width="3" height="7" fill="#535353"/><circle cx="10" cy="5.300" r="1.700" fill="#535353"/></svg>
<div class="abs" style="left:947px;top:188px;width:35px;height:1px;background:#3d3d3d;box-shadow:0 1px 0 #636363"></div>
<div class="abs" style="left:953px;top:193px;width:22px;height:3px;background:#3d3d3d;border-bottom:1px solid #666"></div>
<div class="abs" style="left:957px;top:201px;font-size:17px;line-height:20px;color:#cdcdcd">A</div>
<div class="abs" style="left:970px;top:203px;width:1px;height:16px;background:#cdcdcd"></div>
<svg class="abs" style="left:958px;top:233px" width="14" height="16" viewBox="0 0 14 16"><path d="M6 0H12V15H10.500V1.500H8.500V15H7V8H6A4 4 0 0 1 6 0Z" fill="#cdcdcd"/></svg>
<div class="abs" style="left:947px;top:257px;width:35px;height:1px;background:#3d3d3d;box-shadow:0 1px 0 #636363"></div>
<!-- ===== properties panel ===== -->
<div class="abs" style="left:985px;top:79px;width:251px;height:363px;background:#535353"></div>
<div class="abs" style="left:985px;top:79px;width:251px;height:18px;background:#3f3f3f;border-bottom:1px solid #363636"></div>
<div class="abs" style="left:985px;top:79px;width:37px;height:18px;background:#535353;border-right:1px solid #383838;box-shadow:inset 0 1px 0 #666"></div>
<div class="t" style="left:993px;top:81px;font-size:11.500px">属性</div>
<svg class="abs" style="left:1217px;top:84px" width="15" height="9" viewBox="0 0 15 9"><path d="M0 2L5 2L2.500 5Z" fill="#e0e0e0"/><path d="M6 1.500H15M6 4.500H15M6 7.500H15" stroke="#bababa" stroke-width="1.200"/></svg>
<div class="abs" style="left:995px;top:102px;width:24px;height:22px;background:#3c3c3c;border:1px solid #333;border-radius:3px"></div>
<div class="abs" style="left:999px;top:106px;width:16px;height:13px;background:linear-gradient(#dedede,#b4b4b4)"></div>
<div class="abs" style="left:1004px;top:109px;width:7px;height:7px;border-radius:50%;background:#4c4c4c"></div>
<div class="t" style="left:1025px;top:107px">蒙版</div>
<div class="abs" style="left:985px;top:129px;width:235px;height:1px;background:#434343;box-shadow:0 1px 0 #616161"></div>
<div class="abs" style="left:1220px;top:130px;width:16px;height:293px;background:#494949"></div>
<div class="abs" style="left:992px;top:138px;width:32px;height:32px;background:#808080;border:1px solid #2b2b2b;box-shadow:0 0 0 1px #5f5f5f"></div>
<svg class="abs" style="left:1000px;top:160px" width="4" height="4" viewBox="0 0 4 4"><path d="M0 4L4 4L2 1Z" fill="#f0f0f0"/></svg>
<div class="t" style="left:1029px;top:147px">形状路径</div>
<svg class="abs" style="left:1168px;top:147px" width="18" height="14" viewBox="0 0 18 14"><rect x="0.500" y="0.500" width="15" height="11" fill="#c9c9c9"/><circle cx="8" cy="6" r="3.200" fill="#4c4c4c"/><rect x="9.500" y="5.500" width="8" height="8" fill="#4c4c4c" stroke="#dcdcdc"/><path d="M13.500 7V12M11 9.500H16" stroke="#f0f0f0" stroke-width="1.200"/></svg>
<div class="abs" style="left:1190px;top:143px;width:22px;height:22px;background:#3c3c3c;border:1px solid #333;border-radius:3px"></div>
<svg class="abs" style="left:1193px;top:146px" width="16" height="16" viewBox="0 0 16 16" fill="none"><rect x="2.500" y="2.500" width="11" height="11" stroke="#d6d6d6"/><g fill="#3c3c3c" stroke="#e6e6e6" stroke-width=".8"><rect x="1" y="1" width="3" height="3"/><rect x="12" y="1" width="3" height="3"/><rect x="1" y="12" width="3" height="3"/><rect x="12" y="12" width="3" height="3"/></g></svg>
<div class="abs" style="left:985px;top:186px;width:235px;height:1px;background:#434343;box-shadow:0 1px 0 #616161"></div>
<div class="t" style="left:999px;top:205px">浓度<span class="c">:</span></div>
<div class="inp" style="left:1152px;top:203px;width:55px;height:20px;line-height:18px;padding-left:5px;font-size:11px">100%</div>
<div class="abs" style="left:999px;top:227px;width:208px;height:4px;border-radius:2px;background:#3e3e3e;border-bottom:1px solid #686868"></div>
<svg class="abs" style="left:1201px;top:224px" width="11" height="9" viewBox="0 0 11 9"><path d="M5.500 0.500L10.500 5V8.500H0.500V5Z" fill="#bfbfbf" stroke="#6a6a6a" stroke-width=".6"/></svg>
<div class="t" style="left:999px;top:260px">羽化<span class="c">:</span></div>
<div class="inp" style="left:1152px;top:258px;width:55px;height:20px;line-height:18px;padding-left:3px;font-size:11.500px">0.0 像素</div>
<div class="abs" style="left:999px;top:282px;width:208px;height:4px;border-radius:2px;background:#3e3e3e;border-bottom:1px solid #686868"></div>
<svg class="abs" style="left:993px;top:279px" width="11" height="9" viewBox="0 0 11 9"><path d="M5.500 0.500L10.500 5V8.500H0.500V5Z" fill="#bfbfbf" stroke="#6a6a6a" stroke-width=".6"/></svg>
<div class="t" style="left:994px;top:313px;color:#a3a3a3">调整<span class="c">:</span></div>
<div class="btn" style="left:1110px;top:313px;width:102px;height:19px;background:linear-gradient(#676767,#5b5b5b);box-shadow:inset 0 1px 0 #787878"></div>
<div class="t" style="left:1110px;top:315px;width:102px;text-align:center;color:#a8a8a8">蒙版边缘...</div>
<div class="btn" style="left:1110px;top:342px;width:102px;height:19px;background:linear-gradient(#676767,#5b5b5b);box-shadow:inset 0 1px 0 #787878"></div>
<div class="t" style="left:1110px;top:344px;width:102px;text-align:center;color:#a8a8a8">颜色范围...</div>
<div class="btn" style="left:1110px;top:371px;width:102px;height:19px;background:linear-gradient(#676767,#5b5b5b);box-shadow:inset 0 1px 0 #787878"></div>
<div class="t" style="left:1110px;top:373px;width:102px;text-align:center;color:#a8a8a8">反相</div>
<div class="abs" style="left:985px;top:423px;width:251px;height:19px;background:#4d4d4d;border-top:1px solid #5e5e5e"></div>
<div class="abs" style="left:1157px;top:423px;width:29px;height:19px;background:#3b3b3b"></div>
<svg class="abs" style="left:1104px;top:426px" width="12" height="12" viewBox="0 0 12 12"><circle cx="6" cy="6" r="4.800" fill="none" stroke="#dcdcdc" stroke-width="1.400" stroke-dasharray="1.500 1.500"/></svg>
<svg class="abs" style="left:1130px;top:425px" width="16" height="14" viewBox="0 0 16 14" fill="none"><path d="M1 7L8 12.500L15 7L8 2.500Z" stroke="#8c8c8c" stroke-width="1.500"/><path d="M8 2V8M6 6L8 8.500L10 6" stroke="#8c8c8c" stroke-width="1.200"/></svg>
<svg class="abs" style="left:1164px;top:427px" width="15" height="10" viewBox="0 0 15 10"><path d="M0.500 5C3 1 12 1 14.500 5C12 9 3 9 0.500 5Z" fill="#dedede"/><circle cx="7.500" cy="5" r="2.600" fill="#3b3b3b"/></svg>
<svg class="abs" style="left:1193px;top:425px" width="12" height="14" viewBox="0 0 12 14" fill="none"><path d="M1 3.500H11M4 3V1.500H8V3" stroke="#7e7e7e" stroke-width="1.200"/><path d="M2 5H10L9.300 13H2.700Z" fill="#7e7e7e"/></svg>
<svg class="abs" style="left:1224px;top:429px" width="10" height="11" viewBox="0 0 10 11" fill="none"><path d="M1.500 10.500V9M3.500 10.500V7.500M5.500 10.500V5.500M7.500 10.500V3.500M9.500 10.500V1" stroke="#6c6c6c" stroke-width="1"/></svg>
<!-- ===== layers panel ===== -->
<div class="abs" style="left:985px;top:444px;width:251px;height:396px;background:#535353"></div>
<div class="abs" style="left:985px;top:444px;width:251px;height:18px;background:#3f3f3f;border-bottom:1px solid #363636"></div>
<div class="abs" style="left:985px;top:444px;width:37px;height:18px;background:#535353;border-right:1px solid #383838;box-shadow:inset 0 1px 0 #666"></div>
<div class="abs" style="left:1023px;top:445px;width:75px;height:17px;background:#474747"></div><div class="abs" style="left:1060px;top:445px;width:1px;height:17px;background:#343434"></div>
<div class="abs" style="left:1098px;top:445px;width:1px;height:17px;background:#343434"></div>
<div class="t" style="left:993px;top:446px;font-size:11.500px">图层</div>
<div class="t" style="left:1030px;top:446px;font-size:11.500px;color:#a6a6a6">通道</div>
<div class="t" style="left:1068px;top:446px;font-size:11.500px;color:#a6a6a6">路径</div>
<svg class="abs" style="left:1217px;top:449px" width="15" height="9" viewBox="0 0 15 9"><path d="M0 2L5 2L2.500 5Z" fill="#e0e0e0"/><path d="M6 1.500H15M6 4.500H15M6 7.500H15" stroke="#bababa" stroke-width="1.200"/></svg>
<!-- filter row -->
<div class="btn" style="left:990px;top:465px;width:70px;height:20px"></div>
<svg class="abs" style="left:995px;top:469px" width="11" height="11" viewBox="0 0 11 11" fill="none"><circle cx="6.500" cy="4.500" r="3.200" stroke="#e8e8e8" stroke-width="1.300"/><path d="M4.200 6.800L1 10" stroke="#e8e8e8" stroke-width="1.500"/></svg>
<div class="t" style="left:1011px;top:468px">类型</div>
<svg class="abs" style="left:1049px;top:470px" width="7" height="10" viewBox="0 0 7 10"><path d="M0.500 4L6.500 4L3.500 0.500ZM0.500 6L6.500 6L3.500 9.500Z" fill="#f0f0f0"/></svg>
<svg class="abs" style="left:1081px;top:469px" width="14" height="12" viewBox="0 0 14 12" fill="none"><rect x="0.500" y="0.500" width="13" height="11" stroke="#d0d0d0"/><path d="M2 9.500L5 5.500L7.500 8L9.500 6.500L12 9.500Z" fill="#d0d0d0"/><circle cx="9.500" cy="3.500" r="1.200" fill="#d0d0d0"/></svg>
<svg class="abs" style="left:1105px;top:469px" width="12" height="12" viewBox="0 0 12 12"><circle cx="6" cy="6" r="5.500" fill="#d0d0d0"/><path d="M2.200 9.800A5.400 5.400 0 0 0 9.800 2.200Z" fill="#6a6a6a"/></svg>
<div class="abs" style="left:1129px;top:465px;font-family:'Liberation Serif',serif;font-size:17px;line-height:20px;color:#d0d0d0">T</div>
<svg class="abs" style="left:1153px;top:468px" width="14" height="14" viewBox="0 0 14 14" fill="none"><rect x="2.500" y="2.500" width="9" height="9" stroke="#d0d0d0"/><g fill="#d0d0d0"><rect x="1" y="1" width="3" height="3"/><rect x="10" y="1" width="3" height="3"/><rect x="1" y="10" width="3" height="3"/><rect x="10" y="10" width="3" height="3"/></g></svg>
<svg class="abs" style="left:1177px;top:467px" width="13" height="15" viewBox="0 0 13 15" fill="none"><path d="M4.500 1.500H9L11.500 4V12.500H4.500Z" stroke="#d0d0d0"/><path d="M9 1.500V4H11.500" stroke="#d0d0d0"/><rect x="1" y="7" width="6" height="7" fill="#d0d0d0"/></svg>
<div class="abs" style="left:1212px;top:466px;width:9px;height:18px;background:linear-gradient(#9a9a9a 0 45%,#2e2e2e 45%);border:1px solid #2e2e2e;border-radius:2px"></div>
<div class="abs" style="left:985px;top:488px;width:251px;height:1px;background:#434343;box-shadow:0 1px 0 #5e5e5e"></div>
<!-- blend row -->
<div class="btn" style="left:990px;top:493px;width:110px;height:20px"></div>
<div class="t" style="left:998px;top:496px">正常</div>
<svg class="abs" style="left:1088px;top:498px" width="7" height="10" viewBox="0 0 7 10"><path d="M0.500 4L6.500 4L3.500 0.500ZM0.500 6L6.500 6L3.500 9.500Z" fill="#f0f0f0"/></svg>
<div class="t" style="left:1108px;top:496px">不透明度<span class="c">:</span></div>
<div class="inp" style="left:1165px;top:493px;width:37px;height:20px;line-height:18px;padding-left:4px;font-size:11px">100%</div>
<div class="btn" style="left:1201px;top:493px;width:20px;height:20px;border-radius:0 3px 3px 0"></div>
<svg class="abs" style="left:1207px;top:501px" width="8" height="5" viewBox="0 0 8 5"><path d="M0.500 0.500L7.500 0.500L4 4.500Z" fill="#f0f0f0"/></svg>
<!-- lock row -->
<div class="abs" style="left:985px;top:516px;width:251px;height:1px;background:#434343;box-shadow:0 1px 0 #5e5e5e"></div>
<div class="t" style="left:992px;top:524px">锁定<span class="c">:</span></div>
<svg class="abs" style="left:1029px;top:526px" width="11" height="11" viewBox="0 0 12 12"><rect width="12" height="12" fill="#8a8a8a"/><path d="M0 0H4V4H0ZM8 0H12V4H8ZM4 4H8V8H4ZM0 8H4V12H0ZM8 8H12V12H8Z" fill="#6a6a6a"/></svg>
<svg class="abs" style="left:1049px;top:524px" width="16" height="14" viewBox="0 0 16 14"><path d="M6.500 8.500L14.500 1" stroke="#8c8c8c" stroke-width="1.800"/><path d="M1 13C3 12.500 3.500 10.500 5 9.500L7 11.500C5.500 13 3 13.500 1 13Z" fill="#8c8c8c"/></svg>
<svg class="abs" style="left:1072px;top:524px" width="14" height="14" viewBox="0 0 14 14"><path d="M7 1V13M1 7H13" stroke="#d4d4d4" stroke-width="1.300"/><path d="M5 3L7 0.500L9 3ZM5 11L7 13.500L9 11ZM3 5L0.500 7L3 9ZM11 5L13.500 7L11 9Z" fill="#d4d4d4"/></svg>
<svg class="abs" style="left:1096px;top:524px" width="11" height="14" viewBox="0 0 11 14"><path d="M2.500 7V4.500A3 3 0 0 1 8.500 4.500V7" fill="none" stroke="#d4d4d4" stroke-width="1.600"/><rect x="0.500" y="6.500" width="10" height="7" fill="#d4d4d4"/></svg>
<div class="t" style="left:1132px;top:524px">填充<span class="c">:</span></div>
<div class="inp" style="left:1165px;top:521px;width:37px;height:20px;line-height:18px;padding-left:4px;font-size:11px">100%</div>
<div class="btn" style="left:1201px;top:521px;width:20px;height:20px;border-radius:0 3px 3px 0"></div>
<svg class="abs" style="left:1207px;top:529px" width="8" height="5" viewBox="0 0 8 5"><path d="M0.500 0.500L7.500 0.500L4 4.500Z" fill="#f0f0f0"/></svg>
<div class="abs" style="left:985px;top:546px;width:235px;height:276px;background:#4a4a4a;border-top:1px solid #434343"></div><div class="abs" style="left:985px;top:547px;width:235px;height:233px;background:#535353"></div><div class="abs" style="left:1220px;top:546px;width:16px;height:276px;background:#484848"></div><div class="abs" style="left:985px;top:569px;width:235px;height:1px;background:#434343"></div><svg class="abs" style="left:993px;top:554px" width="14" height="9" viewBox="0 0 14 9"><path d="M0.500 4.500C3 0.500 11 0.500 13.500 4.500C11 8.500 3 8.500 0.500 4.500Z" fill="#bdbdbd"/><circle cx="7" cy="4.300" r="2.500" fill="#4a4a4a"/><circle cx="6.300" cy="3.600" r=".8" fill="#bdbdbd"/></svg><svg class="abs" style="left:1021px;top:553px" width="7" height="9" viewBox="0 0 7 9"><path d="M0.500 0.500L6.500 4.500L0.500 8.500Z" fill="#e8e8e8"/></svg><svg class="abs" style="left:1033px;top:552px" width="16" height="12" viewBox="0 0 16 12"><path d="M0.500 11.500V1.500L1.500 0.500H6L7 2.500H15.500V11.500Z" fill="#b9b9b9"/><path d="M0.500 4H15.500" stroke="#9a9a9a" stroke-width="1"/></svg><div class="t ln" style="left:1060px;top:553px">透视网格</div><svg class="abs" style="left:1192px;top:551px" width="11" height="13" viewBox="0 0 11 13"><path d="M2.500 6V4A3 3 0 0 1 8.500 4V6" fill="none" stroke="#d4d4d4" stroke-width="1.600"/><rect x="0.500" y="5.500" width="10" height="7" fill="#d4d4d4"/><rect x="4.700" y="7.500" width="1.600" height="3" fill="#555"/></svg><div class="abs" style="left:985px;top:592px;width:235px;height:1px;background:#434343"></div><svg class="abs" style="left:993px;top:577px" width="14" height="9" viewBox="0 0 14 9"><path d="M0.500 4.500C3 0.500 11 0.500 13.500 4.500C11 8.500 3 8.500 0.500 4.500Z" fill="#bdbdbd"/><circle cx="7" cy="4.300" r="2.500" fill="#4a4a4a"/><circle cx="6.300" cy="3.600" r=".8" fill="#bdbdbd"/></svg><svg class="abs" style="left:1020px;top:578px" width="9" height="7" viewBox="0 0 9 7"><path d="M0.500 0.500L8.500 0.500L4.500 6.500Z" fill="#e8e8e8"/></svg><svg class="abs" style="left:1032px;top:575px" width="17" height="12" viewBox="0 0 17 12"><path d="M1.500 11.500V1.500L2.500 0.500H7L8 2.500H15.500V5" fill="none" stroke="#b9b9b9" stroke-width="1.200"/><path d="M0.500 5H16.500L15 11.500H2Z" fill="#b9b9b9"/></svg><div class="t ln" style="left:1060px;top:576px">树</div><div class="abs" style="left:1016px;top:593px;width:204px;height:39px;background:#56657b"></div><div class="abs" style="left:985px;top:631px;width:235px;height:1px;background:#434343"></div><svg class="abs" style="left:993px;top:608px" width="14" height="9" viewBox="0 0 14 9"><path d="M0.500 4.500C3 0.500 11 0.500 13.500 4.500C11 8.500 3 8.500 0.500 4.500Z" fill="#bdbdbd"/><circle cx="7" cy="4.300" r="2.500" fill="#4a4a4a"/><circle cx="6.300" cy="3.600" r=".8" fill="#bdbdbd"/></svg><svg class="abs" style="left:1033.500px;top:595px" width="22" height="36" viewBox="0 0 22 36" fill="none"><rect x="2" y="2" width="16" height="32" fill="#68768c"/><rect x="2.500" y="2.500" width="15" height="17" fill="#fff"/><path d="M3 3H7V7H3ZM11 3H15V7H11ZM7 7H11V11H7ZM3 11H7V15H3ZM7 15H11V19H7Z" fill="#e3c9cf"/><path d="M11.500 6H17.500V19.500H7V15Z" fill="#7fc793"/><path d="M2.500 34V2.500H17.500V19.500" stroke="#141414" stroke-width="1.400"/><path d="M17.500 19.500H8V34" stroke="#141414" stroke-width="1"/><path d="M0.500 5V0.500H5M15 0.500H19.500V5M0.500 31V35.500H5M15 35.500H19.500V31" stroke="#eeeeee" stroke-width="1"/><rect x="7.500" y="23.500" width="8" height="7" stroke="#e4e4e4"/><g fill="#68768c" stroke="#e4e4e4" stroke-width=".8"><rect x="6" y="22" width="3" height="3"/><rect x="14" y="22" width="3" height="3"/><rect x="6" y="29" width="3" height="3"/><rect x="14" y="29" width="3" height="3"/></g></svg><div class="t ln" style="left:1061px;top:607px">多边形 1</div><div class="abs" style="left:985px;top:654px;width:235px;height:1px;background:#434343"></div><svg class="abs" style="left:993px;top:639px" width="14" height="9" viewBox="0 0 14 9"><path d="M0.500 4.500C3 0.500 11 0.500 13.500 4.500C11 8.500 3 8.500 0.500 4.500Z" fill="#bdbdbd"/><circle cx="7" cy="4.300" r="2.500" fill="#4a4a4a"/><circle cx="6.300" cy="3.600" r=".8" fill="#bdbdbd"/></svg><svg class="abs" style="left:1021px;top:638px" width="7" height="9" viewBox="0 0 7 9"><path d="M0.500 0.500L6.500 4.500L0.500 8.500Z" fill="#e8e8e8"/></svg><svg class="abs" style="left:1033px;top:637px" width="16" height="12" viewBox="0 0 16 12"><path d="M0.500 11.500V1.500L1.500 0.500H6L7 2.500H15.500V11.500Z" fill="#b9b9b9"/><path d="M0.500 4H15.500" stroke="#9a9a9a" stroke-width="1"/></svg><div class="t ln" style="left:1060px;top:638px">公路 2</div><div class="abs" style="left:985px;top:677px;width:235px;height:1px;background:#434343"></div><svg class="abs" style="left:993px;top:662px" width="14" height="9" viewBox="0 0 14 9"><path d="M0.500 4.500C3 0.500 11 0.500 13.500 4.500C11 8.500 3 8.500 0.500 4.500Z" fill="#bdbdbd"/><circle cx="7" cy="4.300" r="2.500" fill="#4a4a4a"/><circle cx="6.300" cy="3.600" r=".8" fill="#bdbdbd"/></svg><svg class="abs" style="left:1021px;top:661px" width="7" height="9" viewBox="0 0 7 9"><path d="M0.500 0.500L6.500 4.500L0.500 8.500Z" fill="#e8e8e8"/></svg><svg class="abs" style="left:1033px;top:660px" width="16" height="12" viewBox="0 0 16 12"><path d="M0.500 11.500V1.500L1.500 0.500H6L7 2.500H15.500V11.500Z" fill="#b9b9b9"/><path d="M0.500 4H15.500" stroke="#9a9a9a" stroke-width="1"/></svg><div class="t ln" style="left:1060px;top:661px">手机</div><div class="abs" style="left:985px;top:700px;width:235px;height:1px;background:#434343"></div><svg class="abs" style="left:993px;top:685px" width="14" height="9" viewBox="0 0 14 9"><path d="M0.500 4.500C3 0.500 11 0.500 13.500 4.500C11 8.500 3 8.500 0.500 4.500Z" fill="#bdbdbd"/><circle cx="7" cy="4.300" r="2.500" fill="#4a4a4a"/><circle cx="6.300" cy="3.600" r=".8" fill="#bdbdbd"/></svg><svg class="abs" style="left:1021px;top:684px" width="7" height="9" viewBox="0 0 7 9"><path d="M0.500 0.500L6.500 4.500L0.500 8.500Z" fill="#e8e8e8"/></svg><svg class="abs" style="left:1033px;top:683px" width="16" height="12" viewBox="0 0 16 12"><path d="M0.500 11.500V1.500L1.500 0.500H6L7 2.500H15.500V11.500Z" fill="#b9b9b9"/><path d="M0.500 4H15.500" stroke="#9a9a9a" stroke-width="1"/></svg><div class="t ln" style="left:1060px;top:684px">公路</div><div class="abs" style="left:985px;top:739px;width:235px;height:1px;background:#434343"></div><svg class="abs" style="left:993px;top:716px" width="14" height="9" viewBox="0 0 14 9"><path d="M0.500 4.500C3 0.500 11 0.500 13.500 4.500C11 8.500 3 8.500 0.500 4.500Z" fill="#bdbdbd"/><circle cx="7" cy="4.300" r="2.500" fill="#4a4a4a"/><circle cx="6.300" cy="3.600" r=".8" fill="#bdbdbd"/></svg><div class="abs" style="left:1020px;top:705px;width:31px;height:31px;background:#ffc0c0;border:1px solid #2a2a2a"></div><div class="t" style="left:1061px;top:715px">背景</div><div class="abs" style="left:985px;top:779px;width:235px;height:1px;background:#434343"></div><svg class="abs" style="left:993px;top:756px" width="14" height="9" viewBox="0 0 14 9"><path d="M0.500 4.500C3 0.500 11 0.500 13.500 4.500C11 8.500 3 8.500 0.500 4.500Z" fill="#bdbdbd"/><circle cx="7" cy="4.300" r="2.500" fill="#4a4a4a"/><circle cx="6.300" cy="3.600" r=".8" fill="#bdbdbd"/></svg><div class="abs" style="left:1020px;top:744px;width:31px;height:31px;background:#ffffff;border:1px solid #2a2a2a"></div><div class="t" style="left:1061px;top:755px;font-style:italic">背景</div><svg class="abs" style="left:1192px;top:753px" width="11" height="13" viewBox="0 0 11 13" fill="none"><path d="M2.500 6V4A3 3 0 0 1 8.500 4V6" stroke="#c8c8c8" stroke-width="1.200"/><rect x="1" y="6" width="9" height="6.500" stroke="#c8c8c8" stroke-width="1.200"/><rect x="5" y="8" width="1.500" height="2.500" fill="#c8c8c8"/></svg><div class="abs" style="left:1015px;top:547px;width:1px;height:233px;background:#434343"></div><div class="abs" style="left:985px;top:822px;width:251px;height:18px;background:#4d4d4d;border-top:1px solid #5e5e5e"></div><svg class="abs" style="left:1032px;top:827px" width="16" height="9" viewBox="0 0 16 9"><rect x="1" y="1" width="7.500" height="7" rx="3.500" fill="none" stroke="#8f8f8f" stroke-width="1.700"/><rect x="7.500" y="1" width="7.500" height="7" rx="3.500" fill="none" stroke="#8f8f8f" stroke-width="1.700"/><rect x="4.500" y="3.600" width="7" height="1.800" fill="#8f8f8f"/></svg><div class="abs" style="left:1060px;top:822px;font-family:'Liberation Serif',serif;font-style:italic;font-size:15px;line-height:16px;color:#d8d8d8">fx</div><svg class="abs" style="left:1074px;top:835px" width="4" height="3" viewBox="0 0 4 3"><path d="M0 0H4L2 3Z" fill="#d8d8d8"/></svg><svg class="abs" style="left:1087px;top:826px" width="14" height="11" viewBox="0 0 14 11"><rect width="14" height="11" fill="#d2d2d2"/><circle cx="7" cy="5.500" r="3" fill="#4a4a4a"/></svg><svg class="abs" style="left:1114px;top:825px" width="18" height="13" viewBox="0 0 18 13"><circle cx="6.500" cy="6.500" r="5.800" fill="#d2d2d2"/><path d="M2.400 10.600A5.800 5.800 0 0 0 10.600 2.400Z" fill="#5c5c5c"/><path d="M13 10H17L15 13Z" fill="#d8d8d8"/></svg><svg class="abs" style="left:1140px;top:826px" width="15" height="11" viewBox="0 0 15 11"><path d="M0.500 10.500V1.500L1.500 0.500H6L7 2.500H14.500V10.500Z" fill="#d2d2d2"/></svg><svg class="abs" style="left:1168px;top:826px" width="13" height="12" viewBox="0 0 13 12"><path d="M3 0.500H12.500V11.500H6L3 8.500Z" fill="#d2d2d2"/><path d="M0.500 8.500H5.500V11.500Z" fill="#d2d2d2"/></svg><svg class="abs" style="left:1194px;top:825px" width="12" height="14" viewBox="0 0 12 14" fill="none"><path d="M1 3.500H11M4 3V1.500H8V3" stroke="#d2d2d2" stroke-width="1.200"/><path d="M2 5H10L9.300 13H2.700Z" fill="#d2d2d2"/><path d="M4.500 6.500V11.500M7.500 6.500V11.500" stroke="#4d4d4d" stroke-width="1"/></svg>
</div></body></html>
